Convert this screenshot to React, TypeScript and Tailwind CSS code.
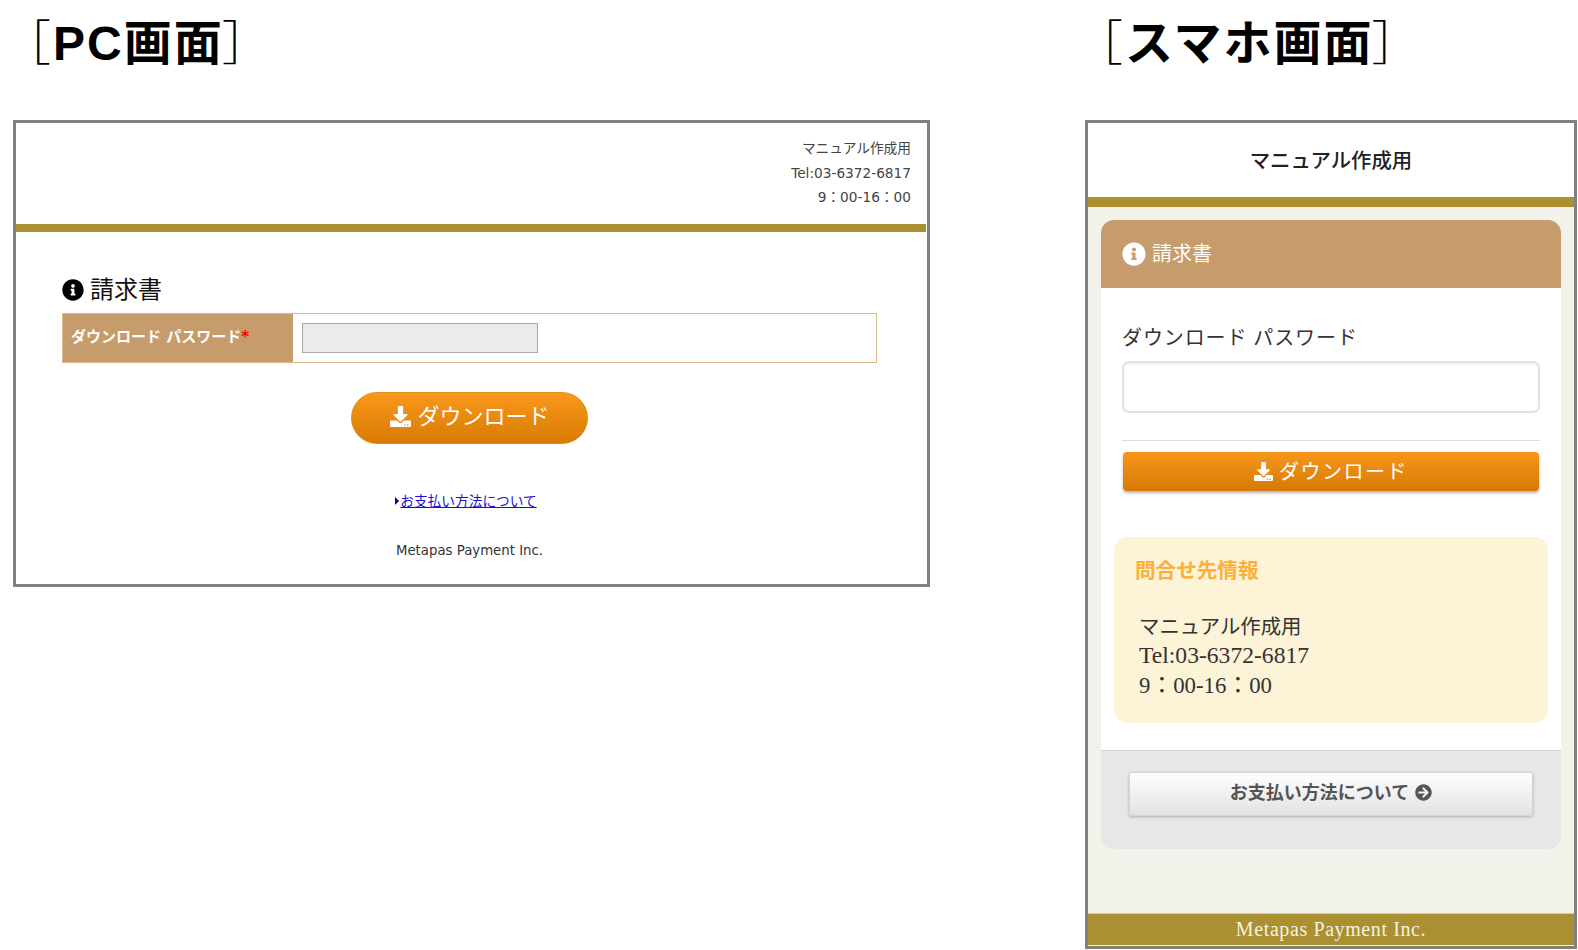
import { FaArrowCircleRight, FaDownload, FaInfoCircle } from 'react-icons/fa'

const SANS = 'font-["DejaVu_Sans","Noto_Sans_CJK_JP",sans-serif]'
const SERIF = 'font-["Liberation_Serif","Noto_Sans_CJK_JP",serif]'

function Title({ children }: { children: string }) {
  return (
    <h1 className='flex h-[120px] items-start pt-[16px] font-["Liberation_Sans","Noto_Sans_CJK_JP",sans-serif] text-[48px] leading-[56px] font-bold tracking-[2px] text-black'>
      <span className="-ml-[29px] font-light">［</span>
      {children}
      <span className="-ml-[2px] font-light">］</span>
    </h1>
  )
}

function PcScreen() {
  return (
    <div className="w-[917px]">
      <div className="pl-[19px]">
        <Title>PC画面</Title>
      </div>
      <div className={`h-[467px] border-[3px] border-[#808080] bg-white ${SANS}`}>
        <div className="flex h-[101px] flex-col items-end pt-[13px] pr-[16px] text-[13.7px] leading-[24.5px] text-[#444]">
          <p>マニュアル作成用</p>
          <p>Tel:03-6372-6817</p>
          <p>9：00-16：00</p>
        </div>
        <div className="mr-[1px] h-[8px] bg-[#aa9030]" />
        <div className="px-[46px] pt-[44px]">
          <h2 className="flex h-[37px] items-start gap-[6px] text-[24px] leading-[28px] text-[#111]">
            <FaInfoCircle className="mt-[3px] size-[22px] text-black" aria-hidden="true" />
            請求書
          </h2>
          <div className="flex h-[50px] w-[815px] border border-[#dcb88c]">
            <div className="flex w-[230px] items-center bg-[#c69c6d] pb-[2px] pl-[8px] text-[15px] font-bold text-white">
              ダウンロード パスワード<span className="text-[#f00]">*</span>
            </div>
            <div className="flex-1 pt-[9px] pl-[9px]">
              <div className="h-[30px] w-[236px] border border-[#aaa] bg-[#ebebeb]" />
            </div>
          </div>
          <div className="flex justify-center pt-[29px] pr-[5px]">
            <button className="flex h-[52px] w-[237px] items-center justify-center gap-[6px] rounded-full border border-[#d9911f] bg-gradient-to-b from-[#f9981a] to-[#d97b02] pb-[4px] pl-[2px] text-[22px] text-white">
              <FaDownload className="size-[21px]" aria-hidden="true" />
              ダウンロード
            </button>
          </div>
          <div className="flex items-center justify-center gap-[1px] pt-[47px] pr-[11px] text-[13.7px] leading-[20px]">
            <span className="h-0 w-0 border-y-[4px] border-l-[4px] border-y-transparent border-l-[#00008b]" />
            <a href="#" className="text-[#1a0dd8] underline">
              お支払い方法について
            </a>
          </div>
          <p className="pt-[30px] pr-[4px] text-center text-[13.3px] leading-[20px] text-[#333]">
            Metapas Payment Inc.
          </p>
        </div>
      </div>
    </div>
  )
}

function PhoneScreen() {
  return (
    <div className="w-[492px]">
      <div className="pl-[19px]">
        <Title>スマホ画面</Title>
      </div>
      <div className={`flex h-[829px] flex-col border-[3px] border-[#808080] bg-[#f2f2ea] ${SERIF}`}>
        <div className="flex h-[74px] items-center justify-center bg-white pt-[2px] text-[20.4px] font-medium text-[#222]">
          マニュアル作成用
        </div>
        <div className="h-[10px] bg-[#aa9030]" />
        <div className="mx-[13px] mt-[13px] overflow-hidden rounded-[13px]">
          <div className="flex h-[68px] items-center gap-[6px] bg-[#c69c6d] pl-[21px] text-[20px] text-white">
            <FaInfoCircle className="size-[24px]" aria-hidden="true" />
            請求書
          </div>
          <div className="h-[462px] bg-white px-[21px]">
            <p className="pt-[36px] text-[20px] leading-[28px] tracking-[0.9px] text-[#333]">
              ダウンロード パスワード
            </p>
            <div className="mt-[9px] h-[52px] rounded-[7px] border-2 border-[#e2e2e2] bg-white shadow-[inset_0_1px_2px_rgba(0,0,0,0.08)]" />
            <div className="mt-[27px] h-[1px] bg-[#dcdcdc]" />
            <button className="mx-[1px] mt-[11px] flex h-[39px] w-[416px] items-center justify-center gap-[6px] rounded-[4px] bg-gradient-to-b from-[#f8961a] to-[#d67a05] text-[20px] tracking-[1.5px] text-white shadow-[0_2px_3px_rgba(0,0,0,0.3)]">
              <FaDownload className="size-[19px]" aria-hidden="true" />
              ダウンロード
            </button>
            <div className="mt-[46px] -mx-[8px] h-[186px] rounded-[14px] bg-[#fdf3d6] pt-[20px] pl-[21px]">
              <h3 className="text-[20.6px] leading-[28px] font-bold text-[#fbb03b]">問合せ先情報</h3>
              <div className="pt-[28px] pl-[4px] text-[#333]">
                <p className="text-[20.4px] leading-[29.5px]">マニュアル作成用</p>
                <p className="-mt-[2px] text-[23.6px] leading-[29.5px]">Tel:03-6372-6817</p>
                <p className="mt-[1px] text-[22.8px] leading-[29.5px]">9：00-16：00</p>
              </div>
            </div>
          </div>
          <div className="h-[99px] border-t border-[#d4d4d4] bg-[#e7e7e7] px-[28px] pt-[21px]">
            <button
              className={`flex h-[44px] w-full items-center justify-center gap-[6px] rounded-[3px] border border-[#d4d4d4] bg-gradient-to-b from-white to-[#e2e2e2] pb-[3px] text-[18px] font-bold text-[#555] shadow-[0_1px_3px_rgba(0,0,0,0.25)] ${SANS}`}
            >
              お支払い方法について
              <FaArrowCircleRight className="size-[17px]" aria-hidden="true" />
            </button>
          </div>
        </div>
        <div className="mt-auto mb-[1px] flex h-[32px] items-center justify-center border-t border-[#ccc] bg-[#aa9030] pb-[2px] text-[20px] tracking-[0.6px] text-[#f5f2e0]">
          Metapas Payment Inc.
        </div>
      </div>
    </div>
  )
}

export default function App() {
  return (
    <div className="flex h-[950px] w-[1578px] justify-between overflow-hidden bg-white pr-[1px] pl-[13px]">
      <PcScreen />
      <PhoneScreen />
    </div>
  )
}
